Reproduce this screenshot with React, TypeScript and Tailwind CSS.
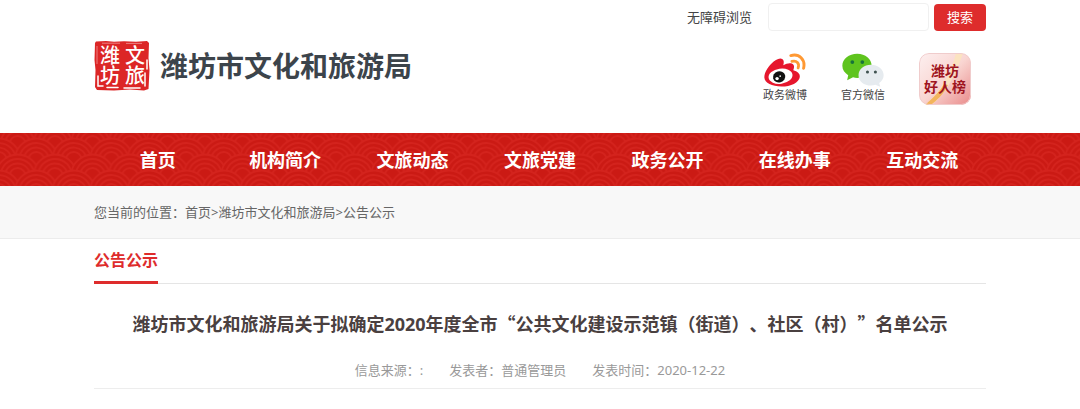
import React from "react";

const navItems = ["首页", "机构简介", "文旅动态", "文旅党建", "政务公开", "在线办事", "互动交流"];

function Seal() {
  return (
    <svg viewBox="0 0 56 51" className="h-[51px] w-14 shrink-0" role="img" aria-label="文旅潍坊">
      <path
        d="M2 1.5L12 1L20 1.8L30 1.2L42 1.8L53 1L55 3L54.5 18L55.5 30L54.5 49L50 50.5L36 49.5L20 50.5L3 50L1 47L1.5 30L.5 20L1 3Z"
        fill="#dc2626"
      />
      <path
        d="M4 36V46H9M13 47.6H24M30 48H46M51 46V33M53 29V20"
        stroke="#fff"
        strokeWidth="1.5"
        fill="none"
        strokeLinecap="round"
      />
      <path d="M3 6V24M8 3.2H26M32 3.4H48" stroke="#f3a6a6" strokeWidth="0.7" fill="none" />
      <g
        className="[writing-mode:vertical-rl]"
        fill="#fff"
        fontFamily="'Noto Sans CJK SC', sans-serif"
        fontWeight="500"
        fontSize="20"
      >
        <text x="41" y="5">文旅</text>
        <text x="16" y="5">潍坊</text>
      </g>
    </svg>
  );
}

function WeiboIcon() {
  return (
    <svg viewBox="52 24 122 98" className="h-[34px] w-[42px]" aria-hidden="true">
      <path
        d="M53 95C53 80 62 66 74 54C84 44 97 36 105 41C111 45 110 53 108 59C118 53 132 51 137 57C141 62 139 68 137 74C149 77 157 84 156 93C154 109 130 121 103 121C75 121 54 111 53 95Z"
        fill="#e6162d"
      />
      <ellipse cx="100" cy="91" rx="35" ry="22" fill="#fff" transform="rotate(-8 100 91)" />
      <ellipse cx="96" cy="93" rx="18" ry="16" fill="#111" transform="rotate(-15 96 93)" />
      <circle cx="90" cy="98" r="5" fill="#fff" />
      <circle cx="99" cy="91" r="2.4" fill="#fff" />
      <path d="M130 31C154 24 173 43 167 68" stroke="#ff9933" strokeWidth="8.5" fill="none" strokeLinecap="round" />
      <path d="M133 48C147 44 156 54 151 67" stroke="#ff9933" strokeWidth="8" fill="none" strokeLinecap="round" />
    </svg>
  );
}

function WechatIcon() {
  return (
    <svg viewBox="41 25 122 98" className="h-[34px] w-[42px]" aria-hidden="true">
      <path
        d="M85 27C61 27 42 42 42 62C42 74 49 83 59 89L56 104L73 95C77 96 81 97 86 97C110 97 127 81 127 62C127 42 109 27 85 27Z"
        fill="#5fc41e"
      />
      <path
        d="M125 59C105 59 89 72 89 89C89 107 105 119 125 119C130 119 134 118 138 117L152 123L149 112C157 106 162 98 162 89C162 72 145 59 125 59Z"
        fill="#e6ebef"
      />
      <circle cx="71" cy="51" r="5.5" fill="#17733b" />
      <circle cx="100" cy="51" r="5.5" fill="#17733b" />
      <circle cx="115" cy="80" r="4.5" fill="#3f5250" />
      <circle cx="138" cy="80" r="4.5" fill="#3f5250" />
    </svg>
  );
}

function HonorBadge() {
  return (
    <svg viewBox="0 0 52 52" className="size-[52px]" role="img" aria-label="潍坊好人榜">
      <defs>
        <linearGradient id="badge" x1="0" y1="0" x2="1" y2="1">
          <stop offset="0" stopColor="#fdf0f0" />
          <stop offset="0.5" stopColor="#f9d6d2" />
          <stop offset="1" stopColor="#e98a8a" />
        </linearGradient>
        <clipPath id="badge-clip">
          <rect width="52" height="52" rx="10" />
        </clipPath>
      </defs>
      <g clipPath="url(#badge-clip)">
        <rect width="52" height="52" fill="url(#badge)" />
        <path d="M6 52C20 40 32 22 37 0H44C36 24 26 42 12 52Z" fill="#fbe3c0" />
        <path d="M6 52C16 43 21 38 25 31L29 32C24 42 18 47 12 52Z" fill="#f3b45c" />
        <rect x="0.5" y="0.5" width="51" height="51" rx="9.5" fill="none" stroke="#f0cccc" />
      </g>
      <text
        fill="#9e1420"
        fontFamily="'Noto Sans CJK SC', sans-serif"
        fontWeight="700"
        fontSize="14"
        textAnchor="middle"
      >
        <tspan x="26" y="23">潍坊</tspan>
        <tspan x="26" y="39">好人榜</tspan>
      </text>
    </svg>
  );
}

function Scale({ x, y }: { x: number; y: number }) {
  return (
    <g fill="#cb1a14" stroke="#d4231d" strokeWidth="1.8">
      <circle cx={x} cy={y} r="21.5" />
      <circle cx={x} cy={y} r="17" />
      <circle cx={x} cy={y} r="12.5" />
      <circle cx={x} cy={y} r="8" />
    </g>
  );
}

const scaleRows = [
  { y: -5, shift: -1.25 },
  { y: 11, shift: 17.5 },
  { y: 27, shift: -1.25 },
  { y: 43, shift: 17.5 },
  { y: 59, shift: -1.25 },
];

function WavePattern() {
  return (
    <svg className="absolute inset-0 size-full" aria-hidden="true">
      <defs>
        <pattern id="waves" width="37.5" height="32" patternUnits="userSpaceOnUse">
          {scaleRows.map(({ y, shift }) =>
            [-37.5, 0, 37.5, 75].map((x) => <Scale key={`${x}:${y}`} x={x + shift} y={y} />)
          )}
        </pattern>
      </defs>
      <rect width="100%" height="100%" fill="url(#waves)" />
    </svg>
  );
}

export default function App() {
  return (
    <div className="min-h-screen bg-white font-['Noto_Sans','Noto_Sans_CJK_SC',sans-serif] text-[13px] leading-5 text-[#444]">
      <header className="mx-auto flex max-w-[892px] justify-between pb-7">
        <a href="#" className="flex items-center gap-2.5 self-end pb-3.5">
          <Seal />
          <span className="text-[28px] leading-10 font-bold text-[#3c444b]">潍坊市文化和旅游局</span>
        </a>
        <div className="flex flex-col items-end gap-[22px] pt-[3px]">
          <form className="flex items-center" onSubmit={(e) => e.preventDefault()}>
            <label htmlFor="search" className="mr-4">无障碍浏览</label>
            <input
              id="search"
              type="text"
              className="mr-[5px] h-7 w-[161px] rounded border border-[#f0f0f0] px-2 outline-none"
            />
            <button type="submit" className="h-[27px] w-[52px] rounded bg-[#de2c2c] text-white">
              搜索
            </button>
          </form>
          <div className="flex gap-[34px] pr-[15px] text-[11px] leading-4">
            <a href="#" className="flex flex-col items-center">
              <WeiboIcon />
              <span>政务微博</span>
            </a>
            <a href="#" className="flex flex-col items-center">
              <WechatIcon />
              <span>官方微信</span>
            </a>
            <a href="#">
              <HonorBadge />
            </a>
          </div>
        </div>
      </header>

      <nav className="relative bg-[#cb1a14]">
        <WavePattern />
        <ul className="relative mx-auto grid max-w-[892px] grid-cols-7 text-center text-lg font-bold text-white">
          {navItems.map((item) => (
            <li key={item}>
              <a href="#" className="block pt-[13px] pb-3 leading-7">{item}</a>
            </li>
          ))}
        </ul>
      </nav>

      <div className="border-b border-[#ececec] bg-[#f8f8f8]">
        <p className="mx-auto max-w-[892px] py-4 text-[#666]">
          您当前的位置：<a href="#">首页</a>&gt;<a href="#">潍坊市文化和旅游局</a>&gt;<a href="#">公告公示</a>
        </p>
      </div>

      <main className="mx-auto max-w-[892px]">
        <div className="flex border-b border-[#e5e5e5]">
          <h2 className="-mb-px border-b-3 border-[#de2c2c] pt-2 pb-2 text-base leading-[26px] font-bold text-[#de2c2c]">
            公告公示
          </h2>
        </div>
        <h1 className="pt-[25px] text-center text-lg leading-7 font-bold text-[#4a4040] [text-spacing-trim:space-all]">
          潍坊市文化和旅游局关于拟确定2020年度全市
          <span className="font-['Noto_Sans_CJK_SC',sans-serif]">“公共文化建设示范镇（街道）、社区（村）”名单公示</span>
        </h1>
        <div className="flex justify-center gap-[26px] border-b border-[#ededed] pt-[22px] pb-2 text-[#999]">
          <span>信息来源：:</span>
          <span>发表者：普通管理员</span>
          <span>发表时间：2020-12-22</span>
        </div>
      </main>
    </div>
  );
}
